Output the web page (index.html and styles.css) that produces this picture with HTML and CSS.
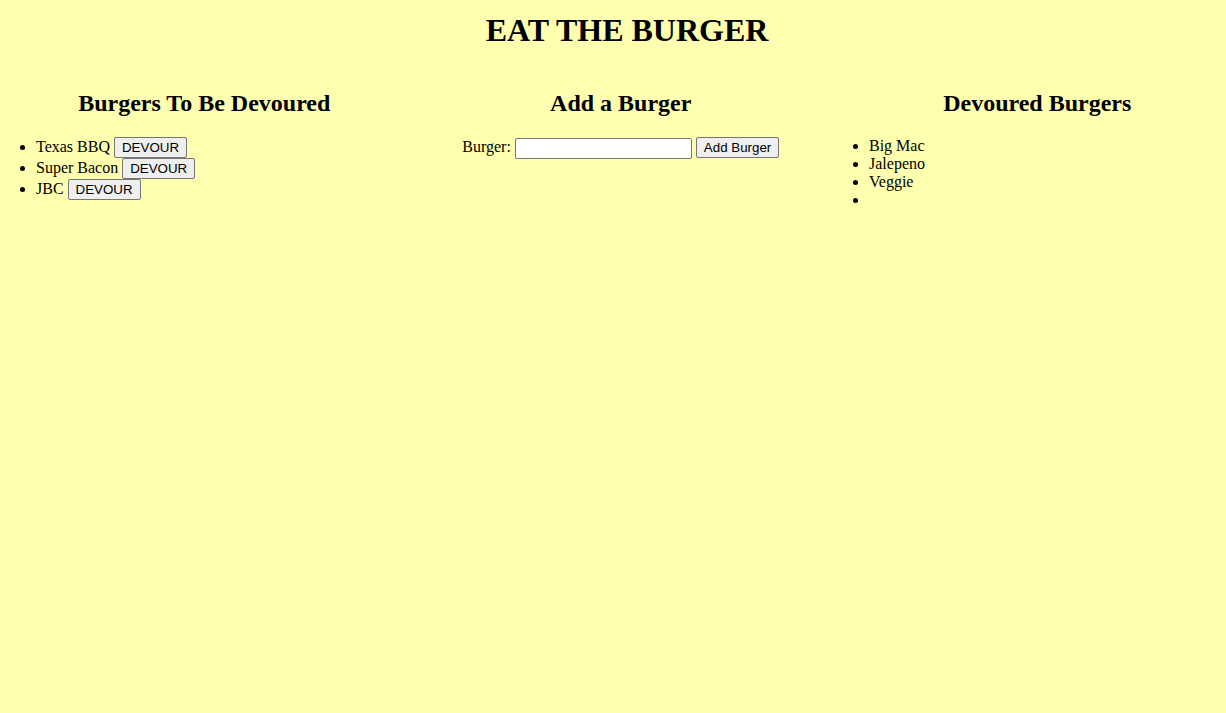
FILE: index.html
```html
<!DOCTYPE html>
<html lang="en">
<head>
<meta charset="utf-8">
<title>Eat the Burger</title>
<link rel="stylesheet" href="styles.css">
</head>
<body>
<h1 class="title">EAT THE BURGER</h1>
<div class="row">
  <section class="col">
    <h2 class="col-title">Burgers To Be Devoured</h2>
    <ul class="list">
      <li>Texas BBQ <button class="btn">DEVOUR</button></li>
      <li>Super Bacon <button class="btn">DEVOUR</button></li>
      <li>JBC <button class="btn">DEVOUR</button></li>
    </ul>
  </section>
  <section class="col">
    <h2 class="col-title">Add a Burger</h2>
    <form class="add-form">
      <label for="burger">Burger:</label> <input id="burger" class="field" type="text"> <button class="btn" type="button">Add Burger</button>
    </form>
  </section>
  <section class="col">
    <h2 class="col-title">Devoured Burgers</h2>
    <ul class="list">
      <li>Big Mac</li>
      <li>Jalepeno</li>
      <li>Veggie</li>
      <li></li>
    </ul>
  </section>
</div>
</body>
</html>
```
FILE: styles.css
```css
html, body {
  background: #ffffb0;
}
body {
  margin: 0;
  overflow-x: hidden;
  font-family: "Liberation Serif", "Times New Roman", serif;
  font-size: 16px;
  color: #000;
}
.title {
  font-size: 32px;
  font-weight: bold;
  text-align: center;
  margin: 12px 0 21.44px;
  padding-left: 28px;
}
.row {
  display: grid;
  grid-template-columns: repeat(3, 416.5px);
  margin-left: -4px;
}
.col {
  min-width: 0;
}
.col-title {
  font-size: 24px;
  font-weight: bold;
  text-align: center;
  margin: 19.92px 0;
}
.list {
  margin: 16px 0;
  padding-left: 40px;
}
.add-form {
  text-align: center;
  margin: 16px 0;
}
.btn {
  font-family: "Liberation Sans", Arial, sans-serif;
  font-size: 13.333px;
  color: #000;
  background: #efefef;
  border: 1px solid #767676;
  border-radius: 2px;
  padding: 2px 7px;
  margin: 0;
}
.field {
  box-sizing: border-box;
  font-family: "Liberation Sans", Arial, sans-serif;
  font-size: 13.333px;
  width: 177px;
  height: 21px;
  border: 1px solid #767676;
  border-radius: 2px;
  padding: 1px 2px;
  background: #fff;
  margin: 0;
  vertical-align: middle;
}
```
